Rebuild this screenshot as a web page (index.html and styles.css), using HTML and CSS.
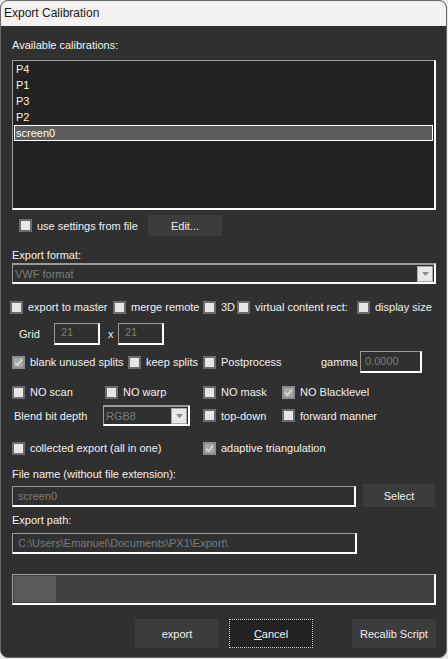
FILE: index.html
```html
<!DOCTYPE html>
<html>
<head>
<meta charset="utf-8">
<link rel="stylesheet" href="styles.css">
</head>
<body>
<div class="window">
  <div class="titlebar">Export Calibration</div>
  <div class="content">
    <div class="label lbl-avail">Available calibrations:</div>
    <div class="listbox">
      <div class="item">P4</div>
      <div class="item">P1</div>
      <div class="item">P3</div>
      <div class="item">P2</div>
      <div class="item selected">screen0</div>
    </div>

    <div class="row row-use">
      <div class="cb-item w-129"><span class="cb"></span><span class="cb-label">use settings from file</span></div>
      <div class="btn btn-edit">Edit...</div>
    </div>

    <div class="label lbl-format">Export format:</div>
    <div class="combo combo-format">
      <span class="combo-text">VWF format</span>
      <span class="drop"><svg width="7" height="4" viewBox="0 0 7 4"><polygon points="0,0 7,0 3.5,4" fill="#8c8c8c"/></svg></span>
    </div>

    <div class="row row1">
      <div class="cb-item w-103"><span class="cb"></span><span class="cb-label">export to master</span></div>
      <div class="cb-item w-90"><span class="cb"></span><span class="cb-label">merge remote</span></div>
      <div class="cb-item w-34"><span class="cb"></span><span class="cb-label">3D</span></div>
      <div class="cb-item w-120"><span class="cb"></span><span class="cb-label">virtual content rect:</span></div>
      <div class="cb-item"><span class="cb"></span><span class="cb-label">display size</span></div>
    </div>

    <div class="row row-grid">
      <span class="plain grid-lbl">Grid</span>
      <div class="field field-grid"><span class="ftext">21</span></div>
      <span class="plain x-lbl">x</span>
      <div class="field field-grid"><span class="ftext">21</span></div>
    </div>

    <div class="row row3">
      <div class="cb-item w-116"><span class="cb checked"><svg width="9" height="9" viewBox="0 0 9 9"><polyline points="1,4.5 3.5,7 8,1.5" fill="none" stroke="#dcdcdc" stroke-width="1.6"/></svg></span><span class="cb-label">blank unused splits</span></div>
      <div class="cb-item w-75"><span class="cb"></span><span class="cb-label">keep splits</span></div>
      <div class="cb-item w-118"><span class="cb"></span><span class="cb-label">Postprocess</span></div>
      <span class="plain gamma-lbl">gamma</span>
      <div class="field field-gamma"><span class="ftext">0.0000</span></div>
    </div>

    <div class="row row4">
      <div class="cb-item w-93"><span class="cb"></span><span class="cb-label">NO scan</span></div>
      <div class="cb-item w-98"><span class="cb"></span><span class="cb-label">NO warp</span></div>
      <div class="cb-item w-79"><span class="cb"></span><span class="cb-label">NO mask</span></div>
      <div class="cb-item"><span class="cb checked"><svg width="9" height="9" viewBox="0 0 9 9"><polyline points="1,4.5 3.5,7 8,1.5" fill="none" stroke="#dcdcdc" stroke-width="1.6"/></svg></span><span class="cb-label">NO Blacklevel</span></div>
    </div>

    <div class="row row5">
      <span class="plain blend-lbl">Blend bit depth</span>
      <div class="combo combo-rgb">
        <span class="combo-text">RGB8</span>
        <span class="drop"><svg width="7" height="4" viewBox="0 0 7 4"><polygon points="0,0 7,0 3.5,4" fill="#8c8c8c"/></svg></span>
      </div>
      <div class="cb-item w-79"><span class="cb"></span><span class="cb-label">top-down</span></div>
      <div class="cb-item"><span class="cb"></span><span class="cb-label">forward manner</span></div>
    </div>

    <div class="row row6">
      <div class="cb-item w-191"><span class="cb"></span><span class="cb-label">collected export (all in one)</span></div>
      <div class="cb-item"><span class="cb checked"><svg width="9" height="9" viewBox="0 0 9 9"><polyline points="1,4.5 3.5,7 8,1.5" fill="none" stroke="#dcdcdc" stroke-width="1.6"/></svg></span><span class="cb-label">adaptive triangulation</span></div>
    </div>

    <div class="label lbl-file">File name (without file extension):</div>
    <div class="row row-file">
      <div class="field field-file"><span class="ftext">screen0</span></div>
      <div class="btn btn-select">Select</div>
    </div>

    <div class="label lbl-path">Export path:</div>
    <div class="field field-path"><span class="ftext">C:\Users\Emanuel\Documents\PX1\Export\</span></div>

    <div class="progress"><div class="chunk"></div></div>

    <div class="row row-buttons">
      <div class="btn btn-bottom">export</div>
      <div class="btn btn-bottom btn-cancel"><span><u>C</u>ancel</span></div>
      <div class="btn btn-bottom">Recalib Script</div>
    </div>
  </div>
</div>
</body>
</html>
```

FILE: styles.css
```css
* { box-sizing: border-box; }
html, body {
  margin: 0;
  padding: 0;
  background: #e9e9e9;
  font-family: "Liberation Sans", Arial, sans-serif;
  font-size: 11px;
  color: #f0f0f0;
}
.window {
  width: 447px;
  height: 658px;
  background: #303030;
  border: 1px solid #6a6a6a;
  border-radius: 8px;
  overflow: hidden;
}
.titlebar {
  height: 25px;
  background: #f3f2f0;
  color: #1a1a1a;
  font-size: 12px;
  line-height: 25px;
  padding-left: 3px;
}
.content {
  padding: 0 10px 0 11px;
}
.label {
  height: 14px;
  line-height: 14px;
  color: #f2f2ee;
}
.lbl-avail { margin-top: 12px; }
.listbox {
  margin-top: 8px;
  height: 150px;
  background: #222222;
  border-top: 1px solid #a0a0a0;
  border-left: 1px solid #a0a0a0;
  border-right: 2px solid #ffffff;
  border-bottom: 2px solid #ffffff;
  padding-left: 2px;
  padding-right: 1px;
}
.item {
  height: 16px;
  line-height: 16px;
  color: #fff6d8;
  padding-left: 1px;
}
.item.selected {
  background: #5c5c5c;
  border: 1px solid #ffffff;
  margin-left: -1px;
  line-height: 14px;
  color: #ffffff;
}
.row {
  display: flex;
  align-items: center;
}
.row-use { margin-top: 5px; height: 21px; padding-left: 7px; }
.cb-item {
  display: flex;
  align-items: center;
  white-space: nowrap;
  overflow: hidden;
  flex: none;
}
.cb {
  width: 13px;
  height: 13px;
  flex: none;
  background: #e6e6e6;
  border: 2px solid #6c6c6c;
  display: flex;
  align-items: center;
  justify-content: center;
}
.cb.checked {
  background: #a8a8a8;
  border-color: #8c8c8c;
}
.cb-label {
  margin-left: 5px;
  color: #f0f0f0;
  white-space: nowrap;
}
.w-34 { width: 34px; }
.w-75 { width: 75px; }
.w-79 { width: 79px; }
.w-90 { width: 90px; }
.w-93 { width: 93px; }
.w-98 { width: 98px; }
.w-103 { width: 103px; }
.w-116 { width: 116px; }
.w-118 { width: 118px; }
.w-120 { width: 120px; }
.w-129 { width: 129px; }
.w-191 { width: 191px; }
.btn {
  background: #3c3c3c;
  color: #f0f0f0;
  display: flex;
  align-items: center;
  justify-content: center;
  flex: none;
}
.btn-edit { width: 74px; height: 21px; }
.lbl-format { margin-top: 12px; }
.combo {
  position: relative;
  border-top: 2px solid #9a9a9a;
  border-left: 1px solid #9a9a9a;
  border-right: 2px solid #ffffff;
  border-bottom: 2px solid #ffffff;
  background: #303030;
  display: flex;
  align-items: center;
}
.combo-text {
  color: #7c7c7c;
  padding-left: 2px;
  flex: 1;
}
.drop {
  width: 16px;
  height: 16px;
  background: #e8e8e8;
  border: 1px solid #a8a8a8;
  display: flex;
  align-items: center;
  justify-content: center;
  margin-right: 1px;
  flex: none;
}
.combo-format { margin-top: 1px; height: 21px; }
.row1 { margin-top: 15px; height: 16px; margin-left: -2px; }
.row-grid { margin-top: 8px; height: 22px; }
.plain { color: #f0f0f0; white-space: nowrap; flex: none; }
.grid-lbl { margin-left: 7px; width: 35px; }
.x-lbl { margin-left: 8px; width: 10px; }
.field {
  border-top: 1px solid #9a9a9a;
  border-left: 1px solid #9a9a9a;
  border-right: 2px solid #ffffff;
  border-bottom: 2px solid #ffffff;
  background: #303030;
  display: flex;
  align-items: center;
  flex: none;
  overflow: hidden;
  white-space: nowrap;
}
.ftext { color: #7c7c7c; padding-left: 5px; }
.field-grid { width: 46px; height: 22px; }
.field-grid .ftext { padding-left: 6px; margin-top: -3px; }
.row3 { margin-top: 6px; height: 22px; }
.gamma-lbl { width: 39px; }
.field-gamma { width: 62px; height: 22px; }
.field-gamma .ftext { padding-left: 4px; margin-top: -1px; }
.row4 { margin-top: 11px; height: 16px; }
.row5 { margin-top: 5px; height: 21px; }
.blend-lbl { margin-left: 2px; width: 89px; }
.combo-rgb { width: 87px; height: 21px; margin-right: 13px; flex: none; }
.row6 { margin-top: 14px; height: 16px; }
.lbl-file { margin-top: 11px; }
.row-file { margin-top: 3px; height: 23px; align-items: flex-end; }
.field-file { width: 344px; height: 21px; }
.btn-select { width: 72px; height: 23px; margin-left: 7px; }
.lbl-path { margin-top: 6px; }
.field-path { width: 345px; height: 21px; margin-top: 6px; }
.progress {
  margin-top: 20px;
  height: 31px;
  background: #404040;
  border-top: 1px solid #a0a0a0;
  border-left: 1px solid #a0a0a0;
  border-right: 2px solid #ffffff;
  border-bottom: 2px solid #ffffff;
  padding: 1px;
}
.chunk {
  width: 42px;
  height: 100%;
  background: #595959;
}
.row-buttons {
  margin-top: 14px;
  height: 29px;
  justify-content: flex-end;
  gap: 10px;
  padding-right: 0;
}
.btn-bottom { width: 84px; height: 29px; }
.btn-cancel {
  background: #222222;
  outline: 1px dotted #d0d0d0;
  outline-offset: -1px;
  margin-right: 29px;
}
```
